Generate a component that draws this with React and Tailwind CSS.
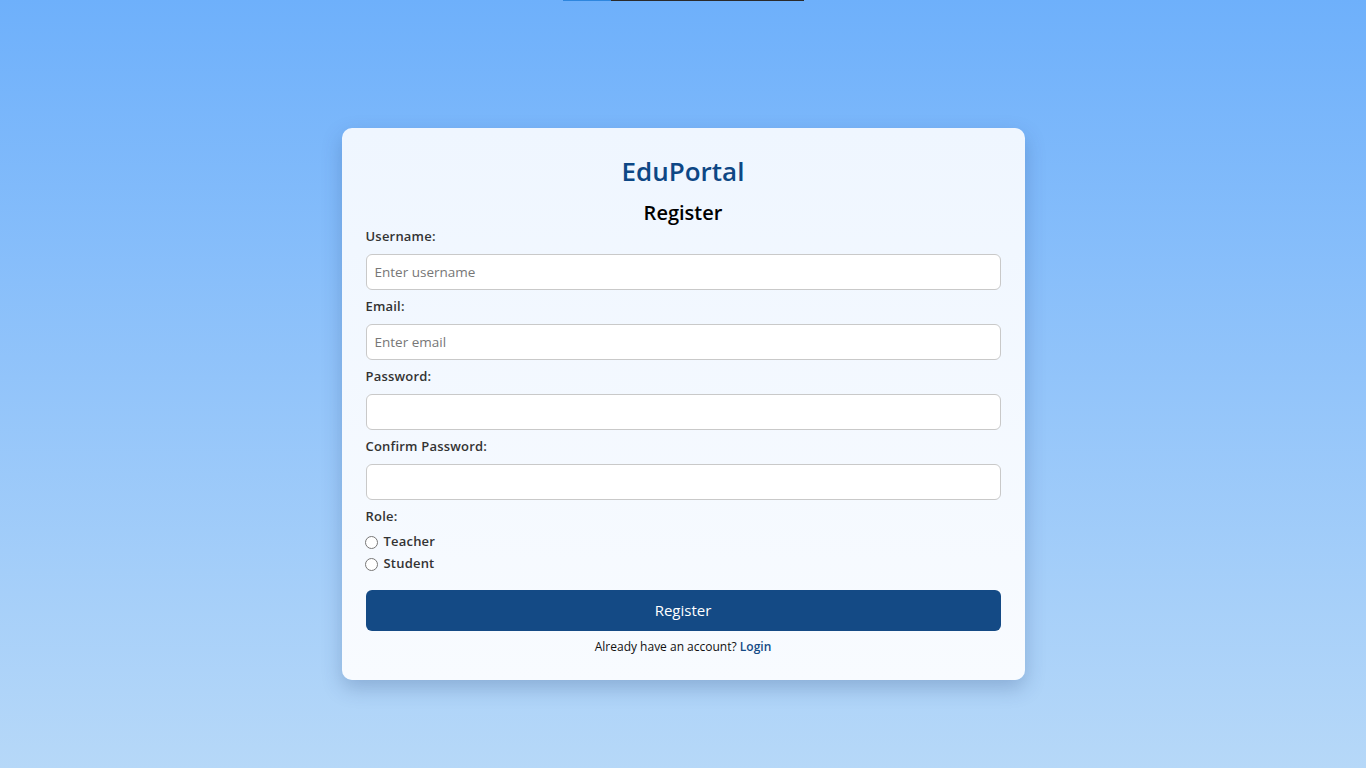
import { useState } from "react";

const fields = [
	{ label: "Username:", type: "text", placeholder: "Enter username" },
	{ label: "Email:", type: "email", placeholder: "Enter email" },
	{ label: "Password:", type: "password", placeholder: "" },
	{ label: "Confirm Password:", type: "password", placeholder: "" },
];

export default function App() {
	const [role, setRole] = useState("");

	return (
		<div
			className="min-h-screen bg-gradient-to-b from-[#6eb0fb] to-[#b6d8f8]"
			style={{ fontFamily: '"Open Sans", "Liberation Sans", sans-serif' }}
		>
			<div className="flex justify-center">
				<div className="flex h-px w-[241px]">
					<div className="w-[48px] bg-[#2e86de]" />
					<div className="flex-1 bg-[#2a2a2a]" />
				</div>
			</div>

			<div className="flex justify-center pt-[127px] pb-[88px]">
				<div className="w-[683px] rounded-[10px] bg-gradient-to-b from-[#eff6ff] to-[#f8fbff] px-6 pt-6 pb-6 shadow-[0_8px_20px_rgba(30,60,110,0.25)]">
					<h1 className="h-[39px] text-center text-[26px] leading-[39px] font-semibold text-[#0d4785]">
						EduPortal
					</h1>
					<h2 className="mt-2 h-[28px] text-center text-[20px] leading-[28px] font-semibold text-black">
						Register
					</h2>

					<form onSubmit={(e) => e.preventDefault()}>
						{fields.map((f, i) => (
							<div key={f.label} className={i === 0 ? "" : "mt-[7px]"}>
								<label className="mb-[9px] block h-[18px] text-[13px] leading-[18px] font-semibold tracking-[0.2px] text-[#333]">
									{f.label}
								</label>
								<input
									type={f.type}
									placeholder={f.placeholder}
									className="block h-9 w-full rounded-[6px] border border-[#c9c9c9] bg-white px-2 text-[13.5px] text-[#222] placeholder:text-[#777] outline-none"
								/>
							</div>
						))}

						<div className="mt-[7px]">
							<label className="block h-[18px] text-[13px] leading-[18px] font-semibold tracking-[0.2px] text-[#333]">
								Role:
							</label>
							<div className="mt-[6px]">
								{["Teacher", "Student"].map((r) => (
									<label key={r} className="flex h-[22px] items-center text-[13px] font-semibold tracking-[0.2px] text-[#333]">
										<input
											type="radio"
											name="role"
											checked={role === r}
											onChange={() => setRole(r)}
											className="m-0 -ml-px mr-[6px] h-[13px] w-[13px]"
										/>
										{r}
									</label>
								))}
							</div>
						</div>

						<button
							type="submit"
							className="mt-[15px] h-[41px] w-full rounded-[6px] bg-[#144a85] text-[15px] text-white"
						>
							Register
						</button>
					</form>

					<p className="mt-[7px] h-[18px] text-center text-[12px] leading-[18px] text-[#111]">
						Already have an account?{" "}
						<a href="#" className="font-semibold text-[#144a85]">
							Login
						</a>
					</p>
				</div>
			</div>
		</div>
	);
}
